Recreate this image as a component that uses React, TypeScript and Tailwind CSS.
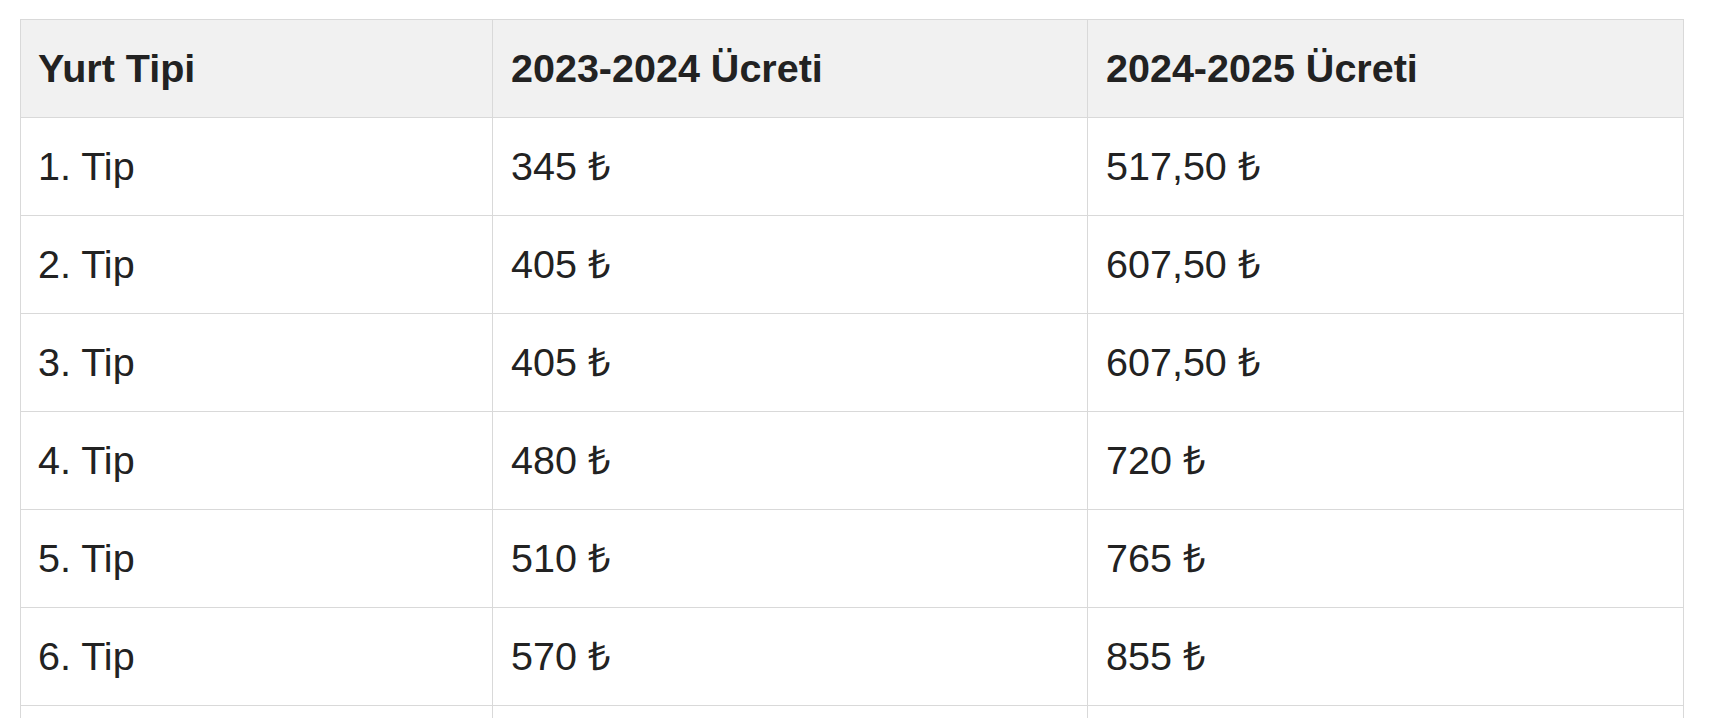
const rows = [
  { tip: '1. Tip', old: '345 ₺', next: '517,50 ₺' },
  { tip: '2. Tip', old: '405 ₺', next: '607,50 ₺' },
  { tip: '3. Tip', old: '405 ₺', next: '607,50 ₺' },
  { tip: '4. Tip', old: '480 ₺', next: '720 ₺' },
  { tip: '5. Tip', old: '510 ₺', next: '765 ₺' },
  { tip: '6. Tip', old: '570 ₺', next: '855 ₺' },
];

export default function App() {
  return (
    <div
      className="min-h-screen bg-white pt-[19px] pl-[20px] pr-[26px] text-[#222222]"
      style={{ fontFamily: '"Liberation Sans", Arial, sans-serif' }}
    >
      <table className="w-[1663px] table-fixed border-collapse text-[39.5px] leading-none">
        <colgroup>
          <col className="w-[472px]" />
          <col className="w-[595px]" />
          <col className="w-[596px]" />
        </colgroup>
        <thead>
          <tr className="bg-[#f1f1f1]">
            <th className="h-[98px] border border-[#d9d9d9] px-[17px] text-left font-bold">Yurt Tipi</th>
            <th className="h-[98px] border border-[#d9d9d9] px-[18px] text-left font-bold">2023-2024 Ücreti</th>
            <th className="h-[98px] border border-[#d9d9d9] px-[18px] text-left font-bold">2024-2025 Ücreti</th>
          </tr>
        </thead>
        <tbody>
          {rows.map((r) => (
            <tr key={r.tip}>
              <td className="h-[98px] border border-[#d9d9d9] px-[17px]">{r.tip}</td>
              <td className="h-[98px] border border-[#d9d9d9] px-[18px]">{r.old}</td>
              <td className="h-[98px] border border-[#d9d9d9] px-[18px]">{r.next}</td>
            </tr>
          ))}
          {/* next row is cut off by the window, only its top edge shows */}
          <tr>
            <td className="h-[98px] border border-[#d9d9d9]" />
            <td className="h-[98px] border border-[#d9d9d9]" />
            <td className="h-[98px] border border-[#d9d9d9]" />
          </tr>
        </tbody>
      </table>
    </div>
  );
}
